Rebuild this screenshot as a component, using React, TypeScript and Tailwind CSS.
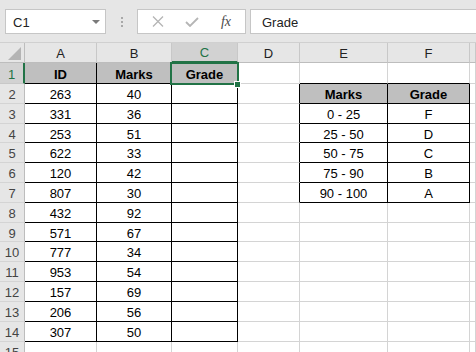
import React from "react";

const colA = ["ID","263","331","253","622","120","807","432","571","777","953","157","206","307"];
const colB = ["Marks","40","36","51","33","42","30","92","67","34","54","69","56","50"];
const right: Record<number, [string, string]> = {
  2: ["Marks", "Grade"],
  3: ["0 - 25", "F"],
  4: ["25 - 50", "D"],
  5: ["50 - 75", "C"],
  6: ["75 - 90", "B"],
  7: ["90 - 100", "A"],
};

function inT(r: number, c: number) {
  if (c >= 1 && c <= 3 && r >= 1 && r <= 14) return true;
  if ((c === 5 || c === 6) && r >= 2 && r <= 7) return true;
  return false;
}

function cellText(r: number, c: number): string {
  if (r >= 1 && r <= 14) {
    if (c === 1) return colA[r - 1];
    if (c === 2) return colB[r - 1];
    if (c === 3 && r === 1) return "Grade";
  }
  if (right[r] && c === 5) return right[r][0];
  if (right[r] && c === 6) return right[r][1];
  return "";
}

function isHead(r: number, c: number) {
  return (r === 1 && c >= 1 && c <= 3) || (r === 2 && (c === 5 || c === 6));
}

function Cell({ r, c }: { r: number; c: number }) {
  const rb = inT(r, c) || inT(r, c + 1);
  const bb = inT(r, c) || inT(r + 1, c);
  const head = isHead(r, c);
  const sel = r === 1 && c === 3;
  const cls = [
    "flex items-center justify-center pt-[2px] border-r border-b whitespace-nowrap overflow-visible",
    sel ? "relative z-10" : "",
    rb ? "border-r-black" : "border-r-[#d4d4d4]",
    bb ? "border-b-black" : "border-b-[#d4d4d4]",
    head ? "bg-[#bfbfbf] font-bold text-black" : "bg-white text-black",
  ].join(" ");
  return (
    <div className={cls}>
      {cellText(r, c)}
      {sel && (
        <>
          <div className="absolute left-[-2px] top-[-1px] right-[-2px] bottom-[-2px] border-2 border-[#217346] pointer-events-none z-20" />
          <div className="absolute right-[-4px] bottom-[-5px] w-[7px] h-[7px] bg-[#217346] border border-white z-30" />
        </>
      )}
    </div>
  );
}

function RowHeader({ r }: { r: number }) {
  const sel = r === 1;
  return (
    <div
      className={
        sel
          ? "flex items-center justify-center pt-[2px] bg-[#d2d2d2] text-[#217346] border-b border-b-[#c8c8c8] border-r-2 border-r-[#217346]"
          : "flex items-center justify-center pt-[2px] bg-[#e6e6e6] text-[#444] border-b border-b-[#d4d4d4] border-r border-r-[#bdbdbd]"
      }
    >
      {r}
    </div>
  );
}

function rowClass(r: number) {
  if (r === 1) return "grid grid-cols-[25px_72px_75px_66px_62px_88px_82px_1fr] h-[21px]";
  if (r === 4 || r === 9) return "grid grid-cols-[25px_72px_75px_66px_62px_88px_82px_1fr] h-[19px]";
  return "grid grid-cols-[25px_72px_75px_66px_62px_88px_82px_1fr] h-[20px]";
}

export default function App() {
  const rows = Array.from({ length: 15 }, (_, i) => i + 1);
  const letters = ["A", "B", "C", "D", "E", "F", ""];
  return (
    <div
      className="w-[476px] h-[352px] overflow-hidden bg-white text-[13px] leading-none"
      style={{ fontFamily: '"Liberation Sans", Arial, sans-serif' }}
    >
      {/* Formula bar */}
      <div className="h-[43px] bg-[#e6e6e6] border-b border-[#d0d0d0] flex items-start pt-[9px]">
        <div className="ml-[5px] w-[101px] h-[25px] bg-white border border-[#c6c6c6] flex items-center justify-between pl-[7px] pr-[5px] text-[#222]">
          <span className="pt-[1px]">C1</span>
          <svg width="8" height="4" viewBox="0 0 8 4">
            <path d="M0 0 L8 0 L4 4 Z" fill="#7a7a7a" />
          </svg>
        </div>
        <div className="w-[31px] h-[25px] flex flex-col items-center justify-center gap-[2px]">
          <div className="w-[2px] h-[2px] bg-[#a8a8a8]" />
          <div className="w-[2px] h-[2px] bg-[#a8a8a8]" />
          <div className="w-[2px] h-[2px] bg-[#a8a8a8]" />
        </div>
        <div className="w-[109px] h-[25px] bg-white border border-[#c6c6c6] flex items-center">
          <div className="w-[38px] flex justify-center pl-[2px]">
            <svg width="12" height="11" viewBox="0 0 12 11">
              <path d="M1 0.5 L11 10.5 M11 0.5 L1 10.5" stroke="#b5b5b5" strokeWidth="1.3" fill="none" />
            </svg>
          </div>
          <div className="w-[32px] flex justify-center">
            <svg width="14" height="10" viewBox="0 0 14 10">
              <path d="M1 5 L5 9 L13 1" stroke="#b5b5b5" strokeWidth="1.8" fill="none" />
            </svg>
          </div>
          <div
            className="w-[36px] flex justify-center italic text-[#4a4a4a] text-[14px]"
            style={{ fontFamily: '"Liberation Serif", "Times New Roman", serif' }}
          >
            fx
          </div>
        </div>
        <div className="ml-[4px] flex-1 mr-[-10px] h-[25px] bg-white border border-[#c6c6c6] flex items-center pl-[11px] text-[#222]">
          <span className="pt-[1px]">Grade</span>
        </div>
      </div>

      {/* Column headers */}
      <div className="grid grid-cols-[25px_72px_75px_66px_62px_88px_82px_1fr] h-[20px] bg-[#e6e6e6]">
        <div className="relative border-r border-b border-[#bdbdbd]">
          <svg className="absolute right-[3px] bottom-[2px]" width="13" height="13" viewBox="0 0 13 13">
            <path d="M13 0 L13 13 L0 13 Z" fill="#b4b4b4" />
          </svg>
        </div>
        {letters.map((l, i) =>
          i === 2 ? (
            <div
              key={i}
              className="flex items-center justify-center pt-[1px] bg-[#d2d2d2] text-[#217346] border-r border-r-[#c8c8c8] border-b-2 border-b-[#217346]"
            >
              {l}
            </div>
          ) : (
            <div
              key={i}
              className="flex items-center justify-center pt-[1px] text-[#222] border-r border-r-[#c8c8c8] border-b border-b-[#bdbdbd]"
            >
              {l}
            </div>
          )
        )}
      </div>

      {rows.map((r) => (
        <div key={r} className={rowClass(r)}>
          <RowHeader r={r} />
          {[1, 2, 3, 4, 5, 6, 7].map((c) => (
            <Cell key={c} r={r} c={c} />
          ))}
        </div>
      ))}
    </div>
  );
}
